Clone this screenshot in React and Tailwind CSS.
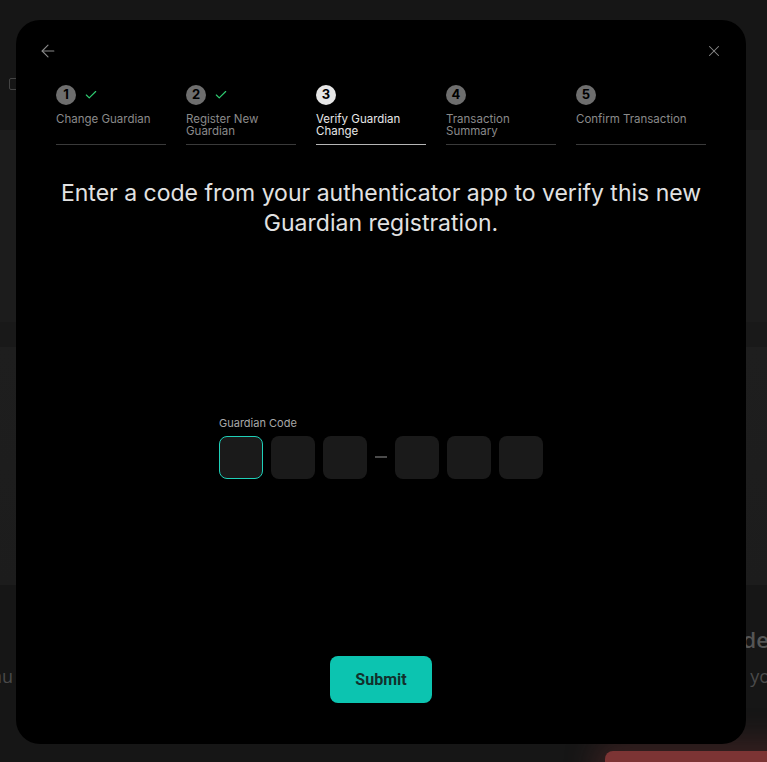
import { ArrowLeft, X, Check } from 'lucide-react';

const steps = [
  { n: 1, label: 'Change Guardian', done: true },
  { n: 2, label: 'Register New Guardian', done: true },
  { n: 3, label: 'Verify Guardian Change', active: true },
  { n: 4, label: 'Transaction Summary' },
  { n: 5, label: 'Confirm Transaction', last: true },
];

function Step({ step }) {
  return (
    <div className={step.last ? 'flex flex-col flex-1' : 'flex flex-col w-[110px]'}>
      <div className="flex items-center gap-2 h-[20px]">
        <span
          className={
            step.active
              ? 'w-5 h-5 rounded-full bg-[#e6e6e6] text-black text-[13px] font-bold flex items-center justify-center'
              : 'w-5 h-5 rounded-full bg-[#6e6e6e] text-black text-[13px] font-bold flex items-center justify-center'
          }
        >
          {step.n}
        </span>
        {step.done && <Check className="w-[14px] h-[14px] text-[#2ecc71]" strokeWidth={2} />}
      </div>
      <div
        className={
          step.active
            ? 'mt-[8px] h-[31px] text-[11.5px] leading-[12px] text-[#e8e8e8] pr-[4px]'
            : 'mt-[8px] h-[31px] text-[11.5px] leading-[12px] text-[#8a8a8a] pr-[4px]'
        }
      >
        {step.label}
      </div>
      <div className={step.active ? 'h-px bg-[#b5b5b5]' : 'h-px bg-[#3a3a3a]'} />
    </div>
  );
}

function CodeBox({ focused }) {
  return (
    <div
      className={
        focused
          ? 'w-[44px] h-[43px] rounded-[8px] bg-[#1a1a1a] border border-[#1fd0b8]'
          : 'w-[44px] h-[43px] rounded-[8px] bg-[#1a1a1a]'
      }
    />
  );
}

export default function App() {
  return (
    <div className="relative w-[767px] h-[762px] overflow-hidden bg-[#151515] font-['Inter',sans-serif]">
      {/* page behind the modal */}
      <div className="flex flex-col h-full">
        <div className="h-[130px] bg-[#161616] flex items-start pt-[78px] pl-[9px]">
          <div className="w-[12px] h-[12px] border border-[#444] rounded-[2px]" />
        </div>
        <div className="h-[192px] bg-[#1c1c1c]" />
        <div className="h-[25px] bg-[#191919]" />
        <div className="h-[238px] bg-gradient-to-b from-[#1e1e1e] to-[#1c1c1c]" />
        <div className="flex-1 bg-[#161616] relative">
          <div className="absolute left-[-8px] top-[78px] text-[18px] text-[#4a4a4a] font-['Open_Sans',sans-serif]">au</div>
          <div className="absolute right-[-2px] top-[38px] text-[22px] font-semibold text-[#555] font-['Open_Sans',sans-serif]">ade</div>
          <div className="absolute right-[-3px] top-[78px] text-[18px] text-[#4a4a4a] font-['Open_Sans',sans-serif]">yo</div>
          <div className="absolute left-[605px] top-[166px] w-[200px] h-[40px] rounded-[8px] bg-[#7c3434] shadow-[0_0_30px_10px_rgba(124,52,52,0.35)]" />
        </div>
      </div>

      {/* modal */}
      <div className="absolute left-[16px] top-[20px] w-[730px] h-[724px] rounded-[24px] bg-black flex flex-col px-[40px] pt-[21px] pb-[41px]">
        <div className="flex justify-between items-center h-[20px] -ml-[18px] -mr-[17px]">
          <ArrowLeft className="w-[20px] h-[20px] text-[#8a8a8a]" strokeWidth={1.3} />
          <X className="w-[18px] h-[18px] text-[#8a8a8a]" strokeWidth={1.4} />
        </div>

        <div className="flex gap-[20px] mt-[24px]">
          {steps.map((s) => (
            <Step key={s.n} step={s} />
          ))}
        </div>

        <h1 className="mt-[33px] text-center text-[23px] leading-[30px] text-[#e2e2e2]">
          Enter a code from your authenticator app to verify this new Guardian registration.
        </h1>

        <div className="flex-1 flex flex-col items-center justify-center">
          <div className="flex flex-col">
            <div className="text-[11px] leading-[14px] text-[#a8a8a8] mb-[6px]">Guardian Code</div>
            <div className="flex items-center gap-[8px]">
              <CodeBox focused />
              <CodeBox />
              <CodeBox />
              <div className="w-[12px] h-[2px] bg-[#4a4a4a]" />
              <CodeBox />
              <CodeBox />
              <CodeBox />
            </div>
          </div>
        </div>

        <div className="flex justify-center">
          <button className="w-[102px] h-[47px] rounded-[8px] bg-[#0cc4b0] text-[#12302c] text-[16px] font-bold font-['Roboto',sans-serif]">
            Submit
          </button>
        </div>
      </div>
    </div>
  );
}
